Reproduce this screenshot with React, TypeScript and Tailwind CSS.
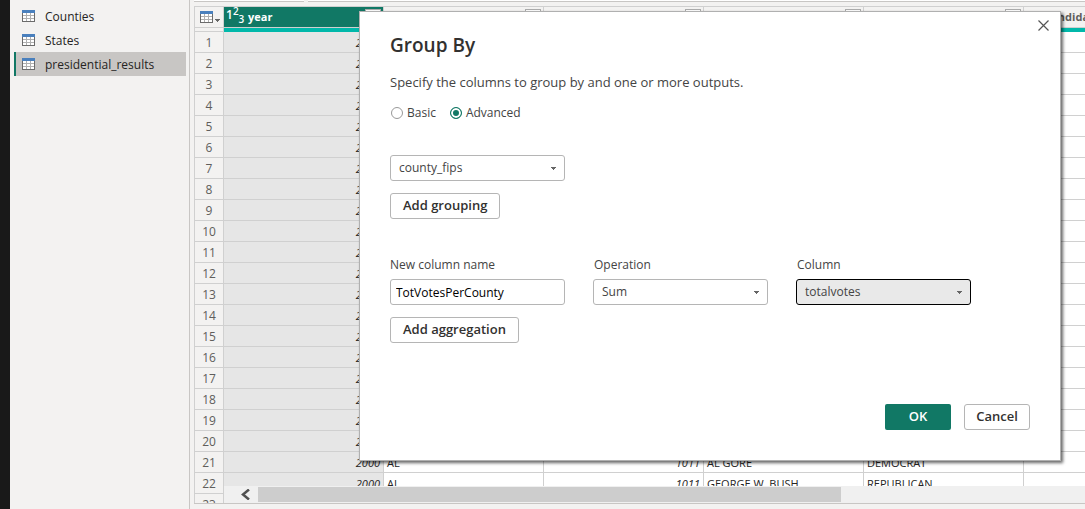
import { useState } from "react";

const tables = ["Counties", "States", "presidential_results"];

const candidates = [
  ["AL GORE", "DEMOCRAT"],
  ["GEORGE W. BUSH", "REPUBLICAN"],
  ["RALPH NADER", "GREEN"],
  ["OTHER", "OTHER"],
];

const rows = Array.from({ length: 23 }, (_, i) => ({
  id: i + 1,
  year: 2000,
  state: "AL",
  fips: 1001 + Math.floor(i / 4) * 2,
  candidate: candidates[i % 4][0],
  party: candidates[i % 4][1],
}));

const columns = ["state_po", "county_fips", "candidate", "party"];

function TableIcon({ className }: { className?: string }) {
  return (
    <svg width="13" height="12" viewBox="0 0 13 12" shapeRendering="crispEdges" className={className} aria-hidden="true">
      <rect width="13" height="12" fill="#fff" />
      <path d="M0 0h13v3H0z" fill="#4a80bd" />
      <path d="M4.5 3v9M8.5 3v9M0 5.5h13M0 8.5h13" stroke="#b0b0b0" />
      <path d="M.5 3v8.5h12V3" fill="none" stroke="#6b6b6b" />
    </svg>
  );
}

function Caret({ className }: { className?: string }) {
  return (
    <svg width="5" height="3" viewBox="0 0 5 3" shapeRendering="crispEdges" className={className} aria-hidden="true">
      <path d="M0 0h5v1H4v1H3v1H2V2H1V1H0z" fill="#666" />
    </svg>
  );
}

function FilterBox() {
  return (
    <button aria-label="Filter" className="flex h-4 w-4 shrink-0 items-center justify-center border border-[#ababab] bg-white">
      <Caret />
    </button>
  );
}

function Select({ id, value, label, active }: { id: string; value: string; label?: string; active?: boolean }) {
  return (
    <div className="relative w-[175px]">
      <select
        id={id}
        aria-label={label}
        defaultValue={value}
        className={
          active
            ? "block h-[26px] w-full appearance-none rounded-[3px] border border-black bg-[#e9e9e9] px-2 text-xs text-[#444] outline-none"
            : "block h-[26px] w-full appearance-none rounded-[3px] border border-[#b5b5b5] bg-white px-2 text-xs text-[#444] outline-none"
        }
      >
        <option>{value}</option>
      </select>
      <Caret className="pointer-events-none absolute top-3 right-[9px]" />
    </div>
  );
}

const outlineButton =
  "h-[26px] rounded-[3px] border border-[#b5b5b5] bg-white px-3 pb-0.5 text-[13px] leading-4 font-semibold text-[#323130]";

function GroupByDialog() {
  const [mode, setMode] = useState("Advanced");
  return (
    <section
      role="dialog"
      aria-labelledby="dialog-title"
      className="absolute top-[11px] right-6 w-[702px] border border-[#b0b0b0] bg-white px-[30px] pt-[19px] pb-[30px] text-[#444] shadow-[2px_2px_3px_rgba(0,0,0,0.6)]"
    >
      <button aria-label="Close" className="absolute top-2 right-[11px]">
        <svg width="11" height="11" viewBox="0 0 11 11" aria-hidden="true">
          <path d="M.5.5l10 10M10.500 .5l-10 10" stroke="#555" strokeWidth="1.200" />
        </svg>
      </button>
      <h1 id="dialog-title" className="text-[19px] leading-7 font-semibold text-[#323130]">
        Group By
      </h1>
      <p className="mt-[13px] text-[13px] leading-5">Specify the columns to group by and one or more outputs.</p>
      <div className="mt-[9px] flex gap-[14px] pl-px text-xs leading-6">
        {["Basic", "Advanced"].map((name) => (
          <label key={name} className="flex items-center gap-1">
            <input
              type="radio"
              name="mode"
              checked={mode === name}
              onChange={() => setMode(name)}
              className="h-3 w-3 appearance-none rounded-full border border-[#999] bg-white checked:border-[#117865] checked:bg-[#117865] checked:shadow-[inset_0_0_0_2px_#fff]"
            />
            {name}
          </label>
        ))}
      </div>
      <div className="mt-[30px]">
        <Select id="grouping" label="Grouping column" value="county_fips" />
        <button className={`mt-3 ${outlineButton}`}>Add grouping</button>
      </div>
      <div className="mt-9 flex gap-7 text-xs leading-5">
        <div>
          <label htmlFor="new-name" className="mb-1 block">New column name</label>
          <input
            id="new-name"
            defaultValue="TotVotesPerCounty"
            className="block h-[26px] w-[175px] rounded-[3px] border border-[#b5b5b5] px-[5px] text-xs text-black outline-none"
          />
        </div>
        <div>
          <label htmlFor="operation" className="mb-1 block pl-px">Operation</label>
          <Select id="operation" value="Sum" />
        </div>
        <div>
          <label htmlFor="column" className="mb-1 block pl-px">Column</label>
          <Select id="column" value="totalvotes" active />
        </div>
      </div>
      <button className={`mt-3 ${outlineButton}`}>Add aggregation</button>
      <div className="mt-[61px] flex justify-end gap-[13px]">
        <button className="h-[26px] w-[66px] rounded-xs bg-[#117865] text-[13px] font-semibold text-white">OK</button>
        <button className="h-[26px] w-[66px] rounded-[3px] border border-[#b5b5b5] bg-white text-[13px] font-semibold text-[#323130]">
          Cancel
        </button>
      </div>
    </section>
  );
}

export default function App() {
  return (
    <div className="relative flex h-screen overflow-hidden bg-[#f3f2f1] font-['Open_Sans','Noto_Sans',sans-serif] text-xs text-[#252423]">
      <div className="w-[10px] shrink-0 bg-[#191919]" />
      <nav className="w-[180px] shrink-0 border-r border-[#c8c6c4] pt-1 pr-[3px] pl-1">
        {tables.map((name) => (
          <a
            key={name}
            href="#"
            className={
              name === "presidential_results"
                ? "flex h-6 items-center gap-[10px] border-l-2 border-[#117865] bg-[#c8c6c4] pl-1.5"
                : "flex h-6 items-center gap-[10px] border-l-2 border-transparent pl-1.5"
            }
          >
            <TableIcon />
            <span className="pt-0.5">{name}</span>
          </a>
        ))}
      </nav>
      <main className="ml-1 flex min-w-0 flex-1 flex-col">
        <div className="flex h-[2px] shrink-0 gap-1">
          <div className="w-[110px] border-b border-[#c8c6c4] bg-white" />
          <div className="flex-1 border-b border-[#c8c6c4] bg-white" />
        </div>
        <div className="relative mt-1 mb-[5px] min-h-0 flex-1 overflow-hidden border-b border-[#c8c6c4]">
          <table className="w-[990px] table-fixed border-separate border-spacing-0 border-t border-l border-[#d0d0d0]">
            <colgroup>
              <col className="w-[29px]" />
              <col className="w-40" />
              <col className="w-40" />
              <col className="w-40" />
              <col className="w-40" />
              <col className="w-40" />
              <col className="w-40" />
            </colgroup>
            <thead className="text-left text-[11px] leading-5 text-[#605e5c]">
              <tr className="h-[21px]">
                <th className="border-r border-b border-[#d0d0d0] p-0">
                  <button aria-label="Table options" className="flex items-center gap-0.5 pl-[5px]">
                    <TableIcon />
                    <Caret className="mt-1.5" />
                  </button>
                </th>
                <th className="border-r border-b border-[#d0d0d0] bg-[#117865] p-0 text-white">
                  <div className="flex h-5 items-center pr-[2px] pl-[2px]">
                    <span className="flex w-[22px] text-xs leading-4 font-semibold">
                      <span>1</span>
                      <span className="-mt-1 text-[10px]">2</span>
                      <span className="mt-1 text-[10px]">3</span>
                    </span>
                    <span className="flex-1">year</span>
                    <FilterBox />
                  </div>
                </th>
                {columns.map((name) => (
                  <th key={name} className="border-r border-b border-[#d0d0d0] p-0">
                    <div className="flex h-5 items-center pr-[2px] pl-1">
                      <span className="w-5 text-[10px]">
                        A<sup className="text-[7px]">B</sup>
                      </span>
                      <span className="flex-1">{name}</span>
                      <FilterBox />
                    </div>
                  </th>
                ))}
                <th className="border-r border-b border-[#d0d0d0] p-0 pl-[3px]">1.2 candidatevotes</th>
              </tr>
              <tr className="h-1">
                <td className="border-r border-b border-[#d0d0d0] p-0" />
                <td colSpan={6} className="bg-[#01b8aa] p-0" />
              </tr>
            </thead>
            <tbody className="bg-white text-[11px] leading-[18px]">
              {rows.map((row) => (
                <tr key={row.id} className="h-[21px]">
                  <th className="border-r border-b border-[#d0d0d0] bg-[#f3f2f1] p-0 pt-0.5 text-center text-xs leading-[18px] font-normal text-[#605e5c]">
                    {row.id}
                  </th>
                  <td className="border-r border-b border-[#d0d0d0] bg-[#e6e6e6] px-[3px] pt-0.5 pb-0 text-right italic">{row.year}</td>
                  <td className="border-r border-b border-[#d0d0d0] px-[3px] pt-0.5 pb-0">{row.state}</td>
                  <td className="border-r border-b border-[#d0d0d0] px-[3px] pt-0.5 pb-0 text-right italic">{row.fips}</td>
                  <td className="border-r border-b border-[#d0d0d0] px-[3px] pt-0.5 pb-0">{row.candidate}</td>
                  <td className="border-r border-b border-[#d0d0d0] px-[3px] pt-0.5 pb-0">{row.party}</td>
                  <td className="border-r border-b border-[#d0d0d0] p-0" />
                </tr>
              ))}
            </tbody>
          </table>
          <div className="absolute right-0 bottom-0 left-[30px] flex h-[17px] items-center bg-[#f0f0f0]">
            <button aria-label="Scroll left" className="flex w-[34px] justify-end pr-2">
              <svg width="9" height="11" viewBox="0 0 9 11" aria-hidden="true">
                <path d="M8 .5L2 5.500l6 5" fill="none" stroke="#505050" strokeWidth="2.500" />
              </svg>
            </button>
            <div className="h-[15px] w-[583px] bg-[#cdcdcd]" />
          </div>
        </div>
      </main>
      <GroupByDialog />
    </div>
  );
}
